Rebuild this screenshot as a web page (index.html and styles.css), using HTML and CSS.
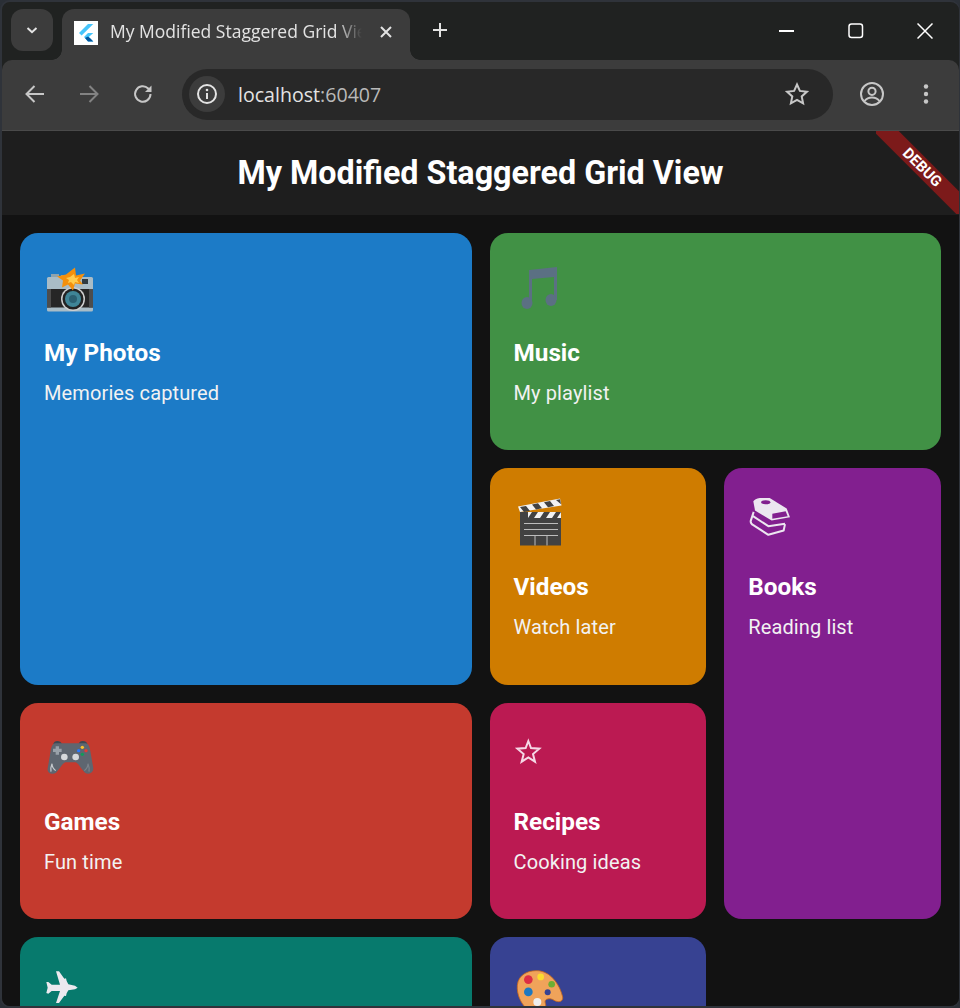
FILE: index.html
```html
<!DOCTYPE html>
<html lang="en">
<head>
<meta charset="utf-8">
<title>My Modified Staggered Grid View</title>
<link rel="stylesheet" href="styles.css">
</head>
<body>
<div class="window">
  <div class="tabstrip">
    <button class="tabsearch"><svg width="16" height="16" viewBox="0 0 16 16"><path d="M3.500 6 8 10.200 12.500 6" class="st w2"/></svg></button>
    <div class="tab">
      <span class="favicon"><svg width="24" height="24" viewBox="0 0 24 24"><path d="M14 3 5 12l2.600 2.600L19.300 3z" fill="#47c5fb"/><path d="M19.300 12h-5.300l-4 4 4 4.500h5.300l-4.500-4.500z" fill="#47c5fb"/><path d="M11 17l3 3.500h5.300l-2.600-2.700-2.700-2.300z" fill="#00569e"/></svg></span>
      <span class="tabtitle">My Modified Staggered Grid View</span>
      <svg class="tabclose" width="16" height="16" viewBox="0 0 16 16"><path d="M3 3l10 10M13 3 3 13" class="st w2"/></svg>
    </div>
    <svg class="newtab" width="18" height="18" viewBox="0 0 18 18"><path d="M9 2v14M2 9h14" class="st w2"/></svg>
    <div class="wincontrols">
      <svg width="16" height="16" viewBox="0 0 16 16"><path d="M0 8h15" class="st w2 pure"/></svg>
      <svg width="16" height="16" viewBox="0 0 16 16"><rect x="1" y="1" width="13.500" height="13.500" rx="2.500" class="st w15"/></svg>
      <svg width="16" height="16" viewBox="0 0 16 16"><path d="M.5.500l15 15M15.500.500l-15 15" class="st w15"/></svg>
    </div>
  </div>
  <div class="toolbar">
    <svg class="tb" width="24" height="24" viewBox="0 0 24 24"><path d="M21 12H4M11.500 4 3.500 12l8 8" class="st icon"/></svg>
    <svg class="tb dim" width="24" height="24" viewBox="0 0 24 24"><path d="M3 12h17M12.500 4l8 8-8 8" class="st icon"/></svg>
    <svg class="tb" width="24" height="24" viewBox="0 0 24 24"><path d="M19.500 12a7.700 7.700 0 1 1-2.300-5.500L19.500 9" class="st icon"/><path d="M20.500 3.500V10H14z" fill="#c7c7c7"/></svg>
    <div class="omnibox">
      <span class="siteinfo"><svg width="22" height="22" viewBox="0 0 22 22"><circle cx="11" cy="11" r="9" class="st w2"/><path d="M11 10v6" class="st w2"/><circle cx="11" cy="7" r="1.300" fill="#e3e3e3"/></svg></span>
      <span class="url">localhost<span class="port">:60407</span></span>
      <svg class="star" width="26" height="26" viewBox="0 0 26 26"><path d="m13 3.500 2.900 6.400 7 .8-5.200 4.700 1.400 6.900-6.100-3.500-6.100 3.500 1.400-6.900-5.200-4.700 7-.8z" class="st icon"/></svg>
    </div>
    <svg class="profile" width="26" height="26" viewBox="0 0 26 26"><circle cx="13" cy="13" r="11" class="st icon"/><circle cx="13" cy="10.300" r="3.600" class="st icon"/><path d="M5.500 20c2-2.600 4.700-3.600 7.500-3.600s5.500 1 7.500 3.600" class="st icon"/></svg>
    <svg class="menu" width="8" height="24" viewBox="0 0 8 24"><circle cx="4" cy="4.500" r="2.200" fill="#c7c7c7"/><circle cx="4" cy="12" r="2.200" fill="#c7c7c7"/><circle cx="4" cy="19.500" r="2.200" fill="#c7c7c7"/></svg>
  </div>
  <main class="app">
    <header class="appbar"><h1>My Modified Staggered Grid View</h1></header>
    <div class="banner"><span>DEBUG</span></div>
    <section class="grid">
      <article class="card blue wide tall">
        <svg class="emoji" viewBox="0 0 52 52"><path d="M7 10h8v4H7zM17 11h5v3h-5z" fill="#8fa3ad"/><rect x="3" y="13" width="46" height="34.500" rx="1.500" fill="#a9bcc6"/><rect x="3" y="25" width="46" height="18.500" fill="#262626"/><rect x="3" y="25" width="4" height="18.500" fill="#4d4d4d"/><rect x="45" y="25" width="4" height="18.500" fill="#4d4d4d"/><rect x="38" y="15" width="6" height="5" fill="#2f3b42"/><circle cx="29" cy="35" r="12" fill="#cfcfcf"/><circle cx="29" cy="35" r="10.500" fill="#222"/><circle cx="29" cy="35" r="8" fill="#3f8597"/><circle cx="29" cy="35" r="4" fill="#2b6072"/><path d="M31 3.500l1 8 9-2-5 7 3 4-8-1-2 7-5-6-6 3 1-7-6-4 9-2z" fill="#f4900c"/><path d="M30 10l1 4 4-1-2 3 2 3-4-1-1 3-3-3-3 1 1-3-3-2 4-1z" fill="#ffcc4d"/></svg>
        <h2>My Photos</h2><p>Memories captured</p>
      </article>
      <article class="card green wide">
        <svg class="emoji" viewBox="0 0 52 52"><path d="M15 6 43 3v33h-3V13L18 15v24h-3z" fill="#5b7083"/><ellipse cx="13" cy="39" rx="5.500" ry="6" fill="#5b7083"/><ellipse cx="37" cy="36" rx="5.500" ry="6" fill="#5b7083"/></svg>
        <h2>Music</h2><p>My playlist</p>
      </article>
      <article class="card orange">
        <svg class="emoji" viewBox="0 0 52 52"><rect x="6" y="18" width="41" height="29.500" fill="#424242"/><path d="M4 8.500 46 .5l1.500 7L6 14z" fill="#f2f2f2"/><path d="M6 9l6-1 4 5-6 1zM18 6.500l6-1.200 4 5-6 1.200zM30 4.200l6-1.200 4 5-6 1.200zM42 2l4-.8 1 5z" fill="#424242"/><path d="M6 14h8v6H6z" fill="#424242"/><path d="M14 14h33v6H14z" fill="#f2f2f2"/><path d="M18 14h6l-4 6h-6zM30 14h6l-4 6h-6zM42 14h5l-4 6h-5z" fill="#424242"/><path d="M10 25.500h34M10 31.500h34M10 37.500h34M21 37.500v10M33 37.500v10" stroke="#bdbdbd" stroke-width="1"/></svg>
        <h2>Videos</h2><p>Watch later</p>
      </article>
      <article class="card purple rowtall">
        <svg class="emoji small" viewBox="39 40.500 132 132"><path d="M56 82 47 110q0 8 8 12l45 29 46-13 4-19M54 95l46 30 50-7" class="book"/><path d="M55 50C60 42 80 38 100 38L155 72l10 26-55 10L60 78Z" fill="#ece6f0"/><ellipse cx="92" cy="53" rx="14" ry="6" fill="#821f8f"/><path d="M112 88l40-8 6 15-46 8z" fill="#821f8f"/></svg>
        <h2>Books</h2><p>Reading list</p>
      </article>
      <article class="card red wide">
        <svg class="emoji" viewBox="42 24 156 156"><path d="M70 57q2-9 12-9 10 0 14 9zM146 57q2-9 12-9 12 0 14 9z" fill="#3d4852"/><path d="M75 55H168C178 58 180 70 183 90L190 130C190 145 175 150 165 143 155 135 145 112 135 112H108C98 112 88 135 78 143 68 150 50 145 53 130L60 90C63 70 65 58 75 55Z" fill="#5e6670"/><path d="M77 64h10v7h8v10h-8v8H77v-8h-8V71h8z" fill="#99a1a9"/><circle cx="103" cy="96" r="10" fill="#d5d8db"/><circle cx="137" cy="96" r="10" fill="#d5d8db"/><circle cx="157" cy="67" r="5" fill="#fbc02d"/><circle cx="146" cy="77" r="5" fill="#2979ff"/><circle cx="168" cy="77" r="5" fill="#e53935"/><circle cx="157" cy="88" r="5" fill="#0f9d58"/><path d="M63 140q-2-12 3-24 0 12 11 21" fill="none" stroke="#c8ccd0" stroke-width="3.500"/><path d="M177 140q2-12-3-24 0 12-11 21" fill="none" stroke="#7b838b" stroke-width="3.500"/></svg>
        <h2>Games</h2><p>Fun time</p>
      </article>
      <article class="card pink">
        <svg class="emoji small" viewBox="42 24 132 132"><path d="M85 48 93 69 118 71 99 87 105 110 85 97 65 110 71 87 52 71 77 69Z" fill="none" stroke="#f5d8e6" stroke-width="6"/></svg>
        <h2>Recipes</h2><p>Cooking ideas</p>
      </article>
      <article class="card teal wide">
        <svg class="emoji" viewBox="132 113 156 156"><path d="M168 123h9l16 22 5-1 2 8 5 10 20 4 8 6-8 5-20 3-5 9-2 8-5-1-16 22h-9l12-36h-25l-10 8-6-2 4-16-4-17h6l10 8h25z" fill="#ece9ef"/></svg>
      </article>
      <article class="card indigo">
        <svg class="emoji" viewBox="102 113.250 156 156"><path d="M112 165C115 130 150 118 180 122 215 128 240 165 248 200 250 215 235 218 222 210 210 202 195 205 195 215 198 225 200 240 190 250 160 265 108 220 112 165Z" fill="#f0a35a" stroke="#c8691e" stroke-width="2.500"/><circle cx="203" cy="186" r="9" fill="#374292"/><circle cx="145" cy="148" r="13" fill="#dd2e44"/><circle cx="182" cy="140" r="10" fill="#fbdc2e"/><circle cx="215" cy="162" r="10" fill="#6cae33"/><circle cx="145" cy="185" r="13" fill="#1e78c0"/><circle cx="172" cy="215" r="12" fill="#eeeeee"/></svg>
      </article>
    </section>
  </main>
</div>
</body>
</html>
```

FILE: styles.css
```css
* { box-sizing: border-box; margin: 0; padding: 0; }
html, body { width: 960px; height: 1008px; overflow: hidden; background: #2a2f36; }
.window { width: 960px; height: 1008px; border: 2px solid #2f333a; border-right-width: 1px; border-radius: 10px; background: #202221; overflow: hidden; display: flex; flex-direction: column; }
.st { fill: none; stroke: #e3e3e3; stroke-linecap: butt; }
.w2 { stroke-width: 2; }
.w15 { stroke-width: 1.500; stroke: #fff; }
.pure { stroke: #fff; }
.icon { stroke: #c7c7c7; stroke-width: 2; }
.book { fill: none; stroke: #ece6f0; stroke-width: 6; stroke-linejoin: round; }

.tabstrip { height: 58px; flex: none; display: flex; align-items: flex-start; position: relative; }
.tabsearch { width: 42px; height: 42px; margin: 7px 0 0 9px; border: 0; border-radius: 12px; background: #3c3c3c; display: flex; align-items: center; justify-content: center; }
.tab { width: 348px; height: 51px; margin: 7px 0 0 9px; background: #3c3c3c; border-radius: 12px 12px 0 0; display: flex; align-items: center; padding: 0 15px 2px 12px; position: relative; }
.tab::before, .tab::after { content: ""; position: absolute; bottom: 0; width: 10px; height: 10px; }
.tab::before { left: -10px; background: radial-gradient(circle at 0 0, transparent 9.500px, #3c3c3c 10px); }
.tab::after { right: -10px; background: radial-gradient(circle at 100% 0, transparent 9.500px, #3c3c3c 10px); }
.favicon { width: 24px; height: 24px; background: #fff; flex: none; display: block; margin-top: -2px; }
.favicon svg { display: block; }
.tabtitle { margin-left: 12px; width: 252px; flex: none; overflow: hidden; white-space: nowrap; font: 400 17.500px "Open Sans", sans-serif; color: #e3e3e3; margin-top: -5px; -webkit-mask-image: linear-gradient(90deg, #000 90%, transparent); mask-image: linear-gradient(90deg, #000 90%, transparent); }
.tabclose { margin-left: 16px; margin-top: -4px; flex: none; }
.newtab { margin: 19px 0 0 21px; }
.wincontrols { margin-left: auto; display: flex; gap: 53px; margin-top: 21px; margin-right: 26px; }

.toolbar { height: 71px; flex: none; background: #3c3c3c; border-radius: 10px 10px 0 0; border-bottom: 1px solid #4a4a4a; display: flex; align-items: center; padding: 0 0 2px 21px; position: relative; }
.tb { margin-right: 30px; flex: none; }
.dim { opacity: .5; }
.omnibox { width: 651px; height: 51px; margin-left: -3px; background: #282828; border-radius: 26px; display: flex; align-items: center; padding: 0 23px 0 7px; flex: none; }
.siteinfo { width: 36px; height: 36px; border-radius: 50%; background: #3c3c3c; display: flex; align-items: center; justify-content: center; flex: none; }
.url { margin-left: 13px; font: 400 19.600px "Open Sans", sans-serif; color: #e3e3e3; }
.port { color: #b9b9b9; }
.star { margin-left: auto; }
.profile { margin-left: 26px; flex: none; }
.menu { margin-left: 37px; flex: none; }

.app { flex: 1; min-height: 0; background: #121212; position: relative; overflow: hidden; }
.appbar { height: 84px; background: #1e1e1e; display: flex; align-items: center; justify-content: center; }
.appbar h1 { font: 700 32.300px Roboto, sans-serif; color: #fff; }
.banner { position: absolute; top: 0; right: 0; width: 83px; height: 83px; overflow: hidden; pointer-events: none; }
.banner span { position: absolute; top: 27.500px; left: -28.500px; width: 150px; height: 18px; padding-right: 2px; background: #7c1a1a; color: #fff; font: 700 15px/18px Roboto, sans-serif; text-align: center; transform: rotate(45deg); }

.grid { display: grid; grid-template-columns: repeat(4, 1fr); grid-auto-rows: 216.750px; gap: 18px; padding: 18px; }
.card { border-radius: 18px; padding: 30.500px 24px 0; color: #fff; overflow: hidden; }
.wide { grid-column: span 2; }
.tall { grid-row: span 2; }
.rowtall { grid-row: span 2; }
.emoji { display: block; width: 52px; height: 52px; margin-bottom: 21px; }
.small { width: 44px; height: 44px; margin-bottom: 29px; }
.card h2 { font: 700 24.300px/32px Roboto, sans-serif; }
.card p { margin-top: 12px; font: 400 20px/24px Roboto, sans-serif; letter-spacing: .12px; color: #f2f2f2; }
.blue { background: #1c7bc7; }
.green { background: #419145; }
.orange { background: #cf7c00; }
.purple { background: #821f8f; }
.red { background: #c43a2e; }
.pink { background: #bb1a52; }
.teal { background: #077a6d; }
.indigo { background: #374292; }
```
